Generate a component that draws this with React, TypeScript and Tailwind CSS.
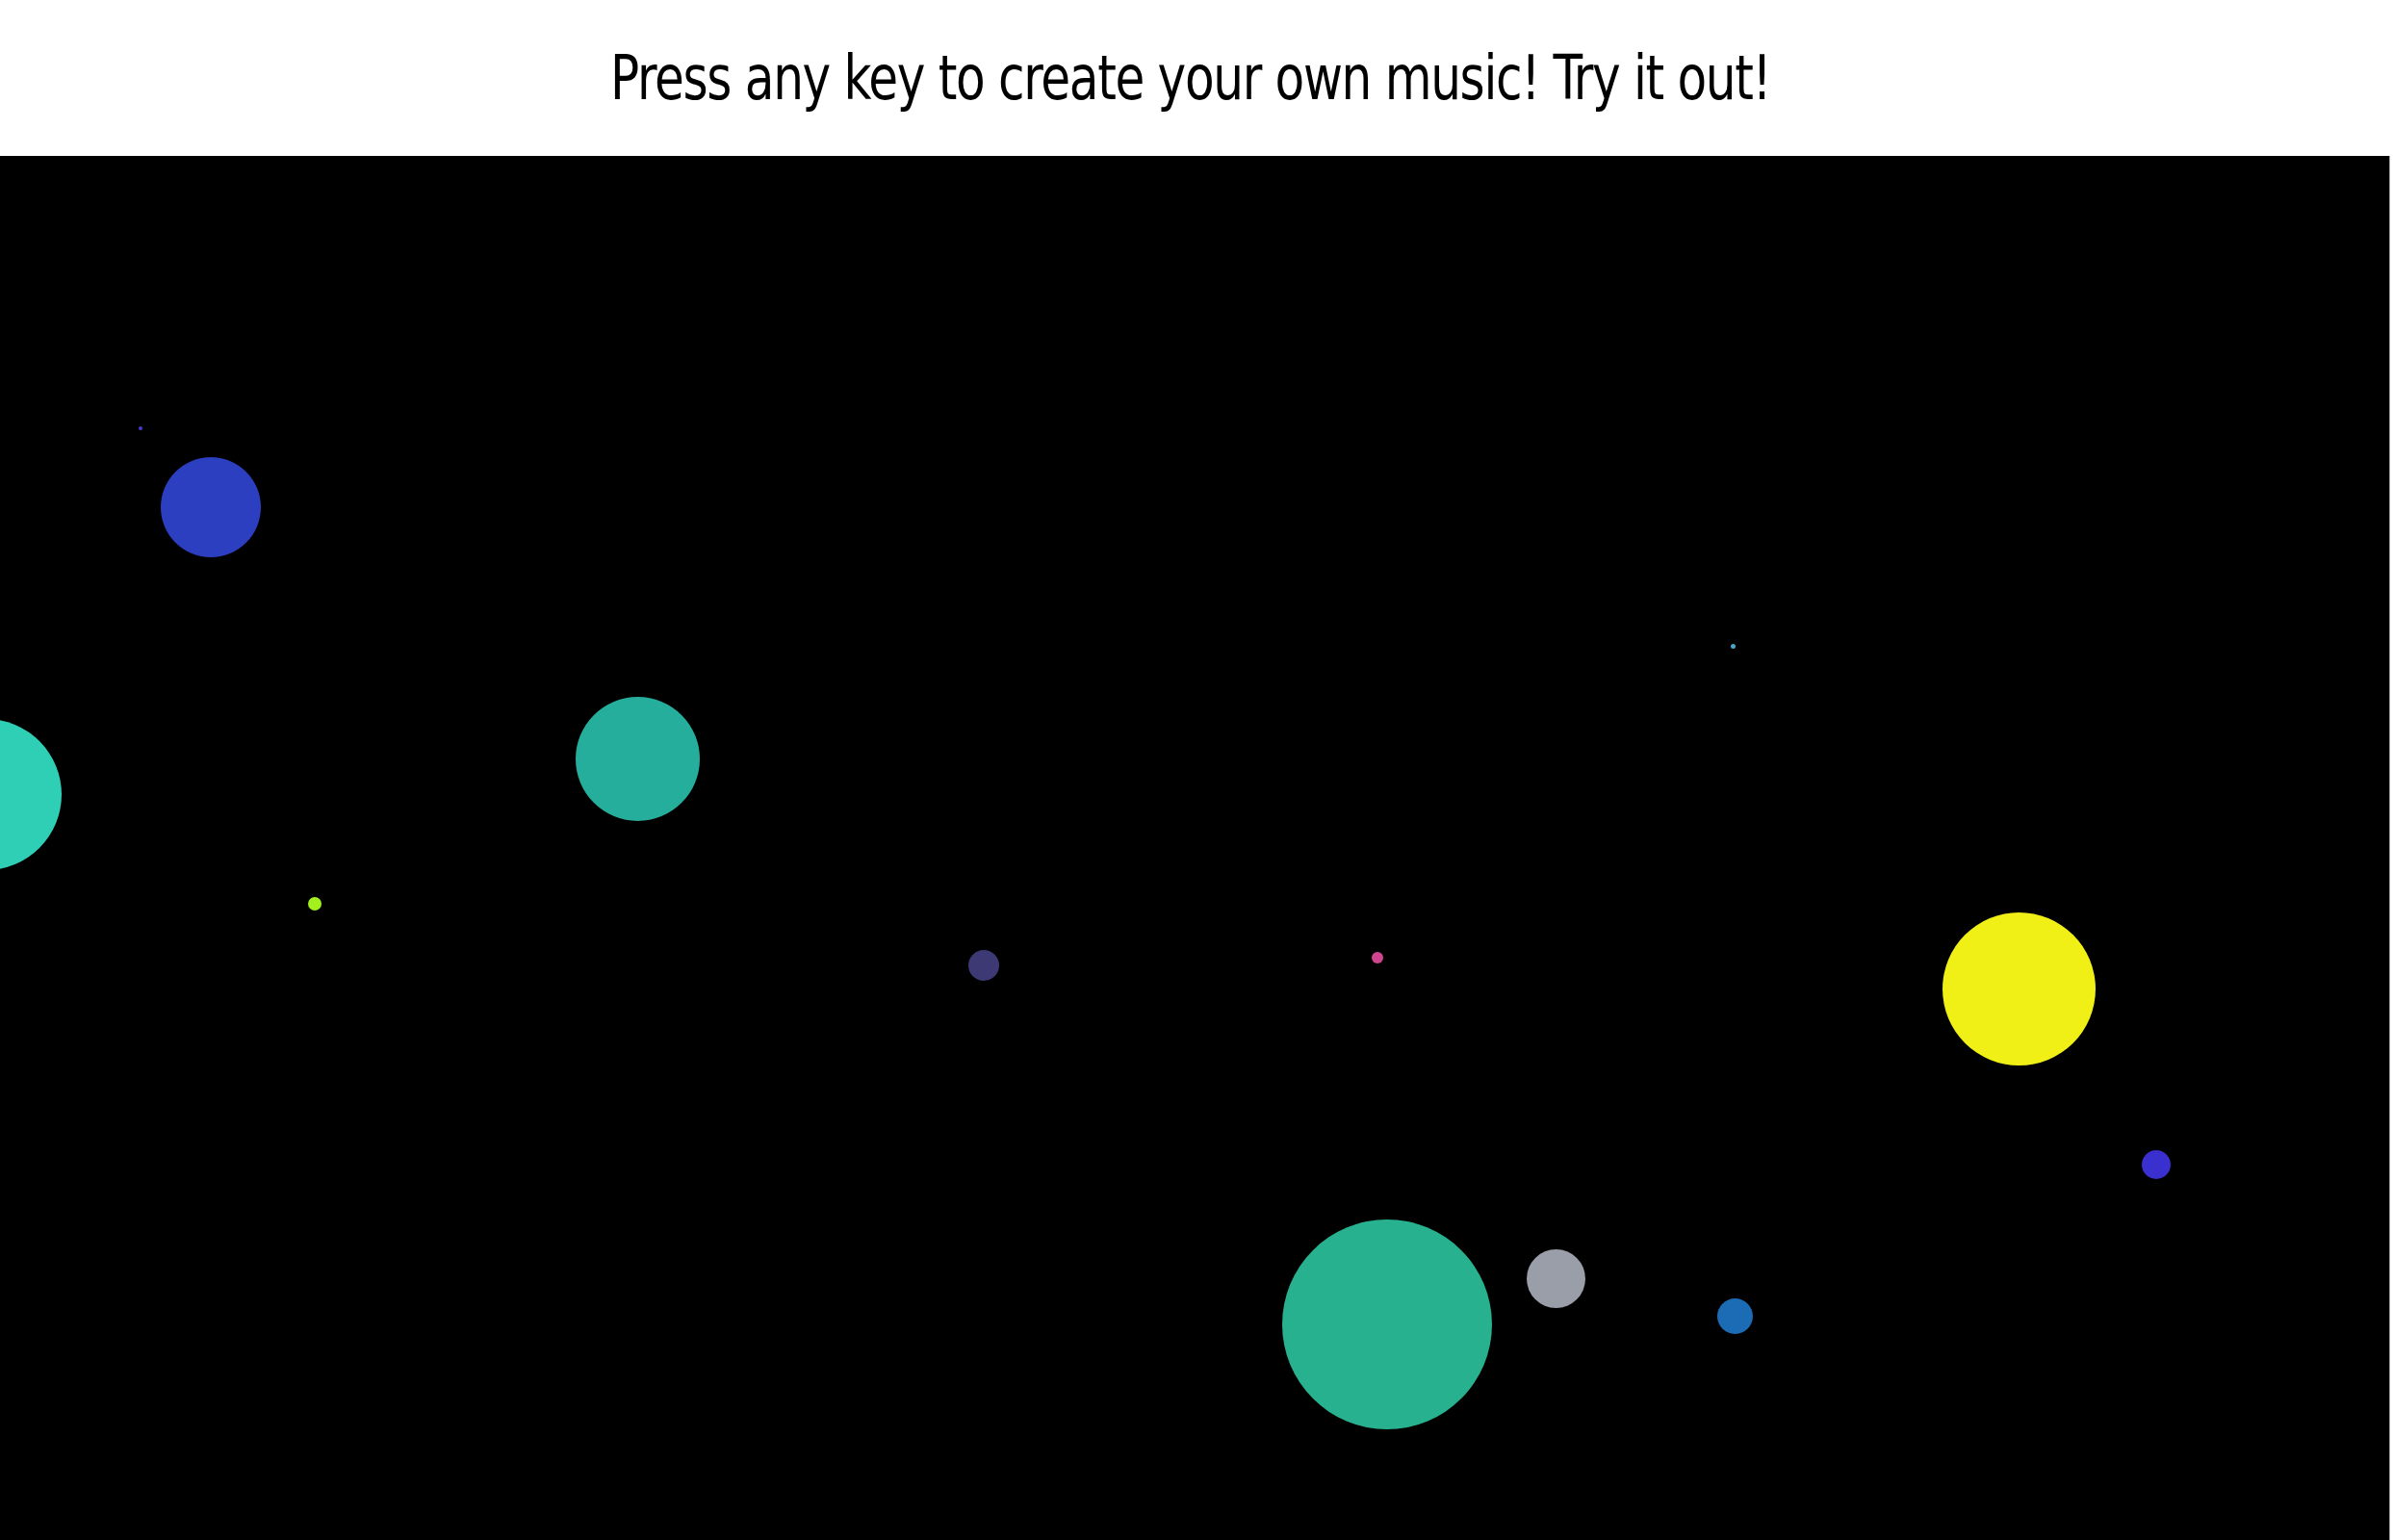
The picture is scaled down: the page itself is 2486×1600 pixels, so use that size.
const Bubble = ({ className }: { className: string }) => (
  <div className={`absolute rounded-full ${className}`} />
);

const App = () => {
  return (
    <div className="flex h-[1600px] w-full flex-col bg-white">
      <header className="flex h-[162px] shrink-0 items-center justify-center pr-[12px]">
        <h1 className="scale-x-[0.87] font-['Liberation_Sans_Narrow','DejaVu_Sans_Condensed',sans-serif] text-[64px] leading-none tracking-[-1.5px] text-black">
          Press any key to create your own music! Try it out!
        </h1>
      </header>
      {/* the canvas where the notes show up */}
      <div className="flex flex-1">
        <section className="relative w-[2482px] overflow-hidden bg-black">
          <Bubble className="left-[144px] top-[281px] h-[4px] w-[4px] bg-[#4a3ad0]" />
          <Bubble className="left-[167px] top-[313px] h-[104px] w-[104px] bg-[#2c3fc0]" />
          <Bubble className="left-[-93px] top-[585px] h-[157px] w-[157px] bg-[#2ecfb5]" />
          <Bubble className="left-[320px] top-[770px] h-[14px] w-[14px] bg-[#a4f01e]" />
          <Bubble className="left-[598px] top-[562px] h-[129px] w-[129px] bg-[#26ae9c]" />
          <Bubble className="left-[1006px] top-[825px] h-[32px] w-[32px] bg-[#3d3975]" />
          <Bubble className="left-[1425px] top-[827px] h-[12px] w-[12px] bg-[#d0458f]" />
          <Bubble className="left-[1332px] top-[1105px] h-[218px] w-[218px] bg-[#27b18f]" />
          <Bubble className="left-[1586px] top-[1136px] h-[61px] w-[61px] bg-[#9a9ea8]" />
          <Bubble className="left-[1784px] top-[1187px] h-[37px] w-[37px] bg-[#1b6bb5]" />
          <Bubble className="left-[1798px] top-[507px] h-[5px] w-[5px] bg-[#4aa6c8]" />
          <Bubble className="left-[2018px] top-[786px] h-[159px] w-[159px] bg-[#f0f016]" />
          <Bubble className="left-[2225px] top-[1033px] h-[30px] w-[30px] bg-[#3a30d0]" />
        </section>
        <div className="w-[1px] bg-[#9a9a9a]" />
        <div className="flex-1 bg-white" />
      </div>
    </div>
  );
};

export default App;
